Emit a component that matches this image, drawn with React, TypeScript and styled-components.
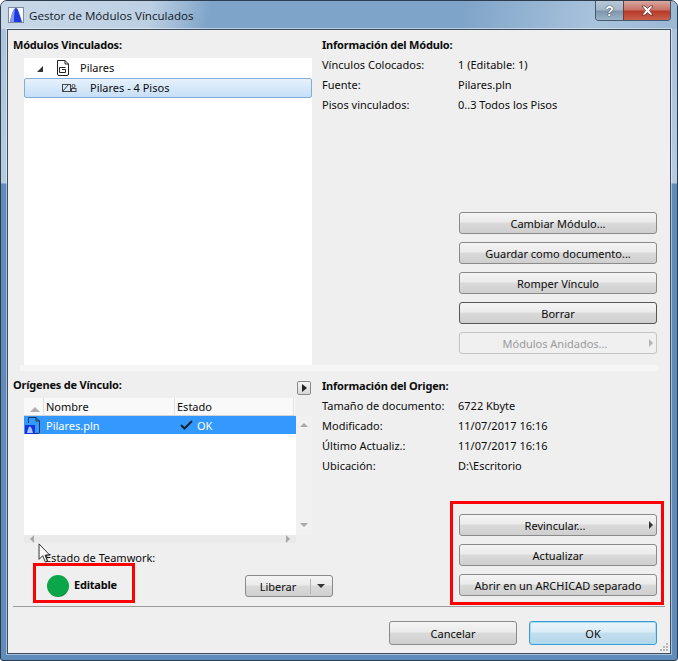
import styled, { createGlobalStyle } from 'styled-components';

const GlobalStyle = createGlobalStyle`
  html, body {
    margin: 0;
    padding: 0;
    background: #ffffff;
  }
  body {
    font-family: "Noto Sans", "Liberation Sans", sans-serif;
    font-size: 11px;
    color: #0c0c0c;
  }
`;

const buttonFace = 'linear-gradient(180deg, #f4f4f4 0, #ebebeb 45%, #dadada 50%, #cfcfcf 100%)';

const Window = styled.div`
  position: relative;
  width: 678px;
  height: 661px;
  box-sizing: border-box;
  padding: 0 6px 6px;
  display: flex;
  flex-direction: column;
  border: 1px solid #2f3c4c;
  border-radius: 7px 7px 3px 3px;
  overflow: hidden;
  background: linear-gradient(180deg, #a9c3dc 0, #b6cbe0 182px, #5f8cbb 183px, #5f8cbb 100%);
`;

const TitleBar = styled.div`
  height: 28px;
  flex: none;
  display: flex;
  align-items: center;
  margin: 0 -6px;
  padding-left: 7px;
  background: linear-gradient(100deg, #c8d8e8 0, #bdd0e3 22%, #7fa4c9 31%, #7fa4c9 68%, #a9c3dc 88%, #9ab7d4 100%);
`;

const TitleText = styled.span`
  margin-left: 5px;
  font-family: "Open Sans", sans-serif;
  font-size: 11.6px;
  color: #10181f;
`;

const WindowButtons = styled.div`
  margin-left: auto;
  margin-right: 6px;
  align-self: flex-start;
  display: flex;
  height: 19px;
  border: 1px solid #46586b;
  border-top: none;
  border-radius: 0 0 4px 4px;
  overflow: hidden;
`;

const WindowButton = styled.div<{ $close?: boolean }>`
  display: flex;
  align-items: center;
  justify-content: center;
  box-sizing: border-box;
  width: ${(p) => (p.$close ? '47px' : '27px')};
  font: bold 14px "Liberation Sans", sans-serif;
  color: #ffffff;
  text-shadow: 0 0 1px #222222, 0 0 1px #222222;
  border-left: ${(p) => (p.$close ? '1px solid #6c3a38' : 'none')};
  background: ${(p) =>
    p.$close
      ? 'linear-gradient(180deg, #d8a8a0 0, #c87468 45%, #b83a28 55%, #c9604e 100%)'
      : 'linear-gradient(180deg, #b6c8d8 0, #a3b8ca 45%, #7f97ac 55%, #9db4c8 100%)'};
`;

const Client = styled.div`
  flex: 1;
  position: relative;
  display: flex;
  flex-direction: column;
  border: 1px solid #3d4d5e;
  box-shadow: 0 0 0 1px rgba(255, 255, 255, 0.45);
  background: #efefef;
  min-height: 0;
`;

const Columns = styled.div`
  display: grid;
  grid-template-columns: 304px 1fr;
`;

const TopColumns = styled(Columns)`
  height: 335px;
`;

const BottomColumns = styled(Columns)`
  height: 235px;
`;

const Pane = styled.div`
  display: flex;
  flex-direction: column;
  min-width: 0;
`;

const LeftPane = styled(Pane)`
  padding-left: 5px;
`;

const RightPane = styled(Pane)<{ $bottom: number }>`
  padding: 0 7px ${(p) => p.$bottom}px 10px;
`;

const Heading = styled.div`
  height: 20px;
  line-height: 20px;
  margin-top: 5px;
  font-weight: 700;
  letter-spacing: -0.2px;
  flex: none;
`;

const Tree = styled.div`
  margin: 3px 0 0 11px;
  flex: 1;
  background: #ffffff;
`;

const TreeRow = styled.div<{ $selected?: boolean; $indent: number }>`
  display: flex;
  align-items: center;
  height: 20px;
  box-sizing: border-box;
  padding-left: ${(p) => p.$indent}px;
  border: 1px solid ${(p) => (p.$selected ? '#84acdd' : 'transparent')};
  border-radius: 2px;
  background: ${(p) => (p.$selected ? 'linear-gradient(180deg, #e6f1fc, #c6dff7)' : 'transparent')};
`;

const TreeCaret = styled.span`
  width: 0;
  height: 0;
  border-style: solid;
  border-width: 0 0 6px 6px;
  border-color: transparent transparent #333333;
  margin-top: 2px;
`;

const TreeIcon = styled.span`
  display: flex;
  margin-left: 13px;
`;

const TreeLabel = styled.span<{ $gap: number }>`
  margin: 0 0 2px ${(p) => p.$gap}px;
`;

const InfoRow = styled.div`
  display: grid;
  grid-template-columns: 136px 1fr;
  height: 20px;
  line-height: 20px;
  flex: none;
`;

const ButtonStack = styled.div`
  margin-top: auto;
  display: flex;
  flex-direction: column;
  gap: 8px;
  width: 198px;
  margin-left: 137px;
`;

const Button = styled.div<{ $disabled?: boolean; $dark?: boolean; $menu?: boolean }>`
  position: relative;
  height: 22px;
  box-sizing: border-box;
  display: flex;
  align-items: center;
  justify-content: center;
  padding-right: ${(p) => (p.$menu ? '6px' : '0')};
  border: 1px solid ${(p) => (p.$disabled ? '#c4c4c4' : p.$dark ? '#555555' : '#8a8a8a')};
  border-radius: 3px;
  color: ${(p) => (p.$disabled ? '#9a9a9a' : '#0c0c0c')};
  background: ${(p) => (p.$disabled ? '#f0f0f0' : buttonFace)};
`;

const ButtonArrow = styled.span<{ $disabled?: boolean }>`
  position: absolute;
  right: 3px;
  top: 6px;
  width: 0;
  height: 0;
  border-style: solid;
  border-width: 4px 0 4px 4px;
  border-color: transparent transparent transparent ${(p) => (p.$disabled ? '#b5b5b5' : '#333333')};
`;

const Splitter = styled.div`
  height: 6px;
  flex: none;
  margin: 0 12px;
  background: #f6f6f6;
`;

const OriginHeader = styled.div`
  display: flex;
  justify-content: space-between;
  padding-right: 1px;
`;

const OriginHeading = styled(Heading)`
  margin-top: 4px;
`;

const ExpandButton = styled.div`
  width: 14px;
  height: 14px;
  margin-top: 10px;
  box-sizing: border-box;
  display: flex;
  align-items: center;
  justify-content: center;
  border: 1px solid #8a8a8a;
  border-radius: 2px;
  background: linear-gradient(180deg, #f4f4f4, #d8d8d8);
  &::before {
    content: '';
    border-style: solid;
    border-width: 4px 0 4px 5px;
    border-color: transparent transparent transparent #222222;
  }
`;

const ListArea = styled.div`
  margin: 3px 0 0 11px;
  display: grid;
  grid-template-columns: 272px 16px;
  grid-template-rows: 18px 119px 8px;
  width: 288px;
`;

const ListHeader = styled.div`
  grid-column: 1 / 3;
  display: flex;
  height: 17px;
  width: 271px;
  border-bottom: 1px solid #d4d4d4;
  background: #f9f9f9;
`;

const ListHeaderCell = styled.div<{ $width: number }>`
  width: ${(p) => p.$width}px;
  flex: none;
  box-sizing: border-box;
  display: flex;
  align-items: center;
  padding-left: 2px;
  border-right: 1px solid #e0e0e0;
`;

const SortCorner = styled(ListHeaderCell)`
  justify-content: center;
  &::before {
    content: '';
    border-style: solid;
    border-width: 0 5px 5px 5px;
    border-color: transparent transparent #b0b0b0 transparent;
    margin-top: 5px;
  }
`;

const ListBody = styled.div`
  background: #ffffff;
`;

const ListRow = styled.div`
  height: 18px;
  display: flex;
  align-items: center;
  background: #3399ff;
  color: #ffffff;
`;

const FileName = styled.span`
  width: 134px;
  margin-left: 5px;
  flex: none;
`;

const StatusMark = styled.span`
  display: flex;
  align-items: center;
  gap: 4px;
`;

const ScrollTrack = styled.div`
  display: flex;
  flex-direction: column;
  justify-content: space-between;
  align-items: center;
  padding: 7px 0 8px;
  box-sizing: border-box;
  background: #f1f1f1;
`;

const HScroll = styled.div`
  grid-column: 1 / 2;
  display: flex;
  justify-content: space-between;
  align-items: center;
  padding: 0 6px;
  background: #eaeaea;
`;

const Tick = styled.span<{ $dir: 'up' | 'down' | 'left' | 'right' }>`
  width: 0;
  height: 0;
  border-style: solid;
  border-color: transparent;
  ${(p) => p.$dir === 'up' && 'border-width: 0 4px 4px; border-bottom-color: #a8a8a8;'}
  ${(p) => p.$dir === 'down' && 'border-width: 4px 4px 0; border-top-color: #a8a8a8;'}
  ${(p) => p.$dir === 'left' && 'border-width: 4px 4px 4px 0; border-right-color: #a8a8a8;'}
  ${(p) => p.$dir === 'right' && 'border-width: 4px 0 4px 4px; border-left-color: #a8a8a8;'}
`;

const TeamworkLabel = styled.div`
  margin: 7px 0 0 32px;
  height: 16px;
  line-height: 16px;
`;

const TeamworkRow = styled.div`
  display: flex;
  align-items: center;
  margin: 8px -21px 0 34px;
`;

const StatusDot = styled.div`
  width: 22px;
  height: 22px;
  border-radius: 50%;
  background: radial-gradient(circle at 42% 38%, #0ba64a 0, #0ba64a 68%, #0a8a3e 72%);
`;

const StatusText = styled.span`
  margin: 0 0 2px 5px;
  font-weight: 700;
  letter-spacing: -0.2px;
`;

const SplitButton = styled.div`
  margin-left: auto;
  margin-top: 1px;
  width: 88px;
  height: 22px;
  box-sizing: border-box;
  display: flex;
  align-items: center;
  border: 1px solid #8a8a8a;
  border-radius: 3px;
  background: ${buttonFace};
`;

const SplitLabel = styled.span`
  width: 64px;
  text-align: center;
  border-right: 1px solid #b4b4b4;
`;

const SplitArrow = styled.span`
  margin-left: 6px;
  border-style: solid;
  border-width: 4px 4px 0;
  border-color: #333333 transparent transparent;
`;

const FooterRule = styled.div`
  height: 1px;
  flex: none;
  margin: 0 5px;
  background: #9a9a9a;
`;

const Footer = styled.div`
  flex: 1;
  display: flex;
  justify-content: flex-end;
  align-items: flex-start;
  gap: 12px;
  padding: 14px 13px 0 0;
`;

const FooterButton = styled.div<{ $primary?: boolean }>`
  width: 128px;
  height: 24px;
  box-sizing: border-box;
  display: flex;
  align-items: center;
  justify-content: center;
  border: 1px solid ${(p) => (p.$primary ? '#3c9bd2' : '#8a8a8a')};
  border-radius: 3px;
  box-shadow: ${(p) => (p.$primary ? 'inset 0 0 0 1px #a5dcf2' : 'none')};
  background: ${(p) =>
    p.$primary
      ? 'linear-gradient(180deg, #eaf5fb 0, #dcecf6 45%, #c2dfef 50%, #b4d6ea 100%)'
      : buttonFace};
`;

const Callout = styled.div<{ $x: number; $y: number; $w: number; $h: number }>`
  position: absolute;
  left: ${(p) => p.$x}px;
  top: ${(p) => p.$y}px;
  width: ${(p) => p.$w}px;
  height: ${(p) => p.$h}px;
  box-sizing: border-box;
  border: 3px solid #ff0000;
  pointer-events: none;
`;

const Cursor = styled.svg`
  position: absolute;
  left: 37px;
  top: 542px;
`;

const GripDots = styled.svg`
  position: absolute;
  right: 1px;
  bottom: 1px;
`;

const AppIcon = () => (
  <svg width="16" height="16" viewBox="0 0 16 16">
    <rect x="0.5" y="0.5" width="15" height="15" fill="#f6f8fd" stroke="#7d8aa0" />
    <path d="M2 15 C4 5 6 1 8 1 C10 1 12 9 14 15 Z" fill="#1f3be0" />
    <path d="M2 15 C4 6 5 3 7 2 C6 6 6 11 6 15 Z" fill="#7f9cf0" />
  </svg>
);

const ModuleIcon = () => (
  <svg width="14" height="16" viewBox="0 0 14 16" fill="none" stroke="#222222">
    <path d="M1.5 0.5 H9 L12.5 4 V14 Q12.5 15.5 11 15.5 H3 Q1.5 15.5 1.5 14 Z" />
    <path d="M9 0.5 V4 H12.5" />
    <path d="M3.5 7.5 H9.5 M3.5 7.5 V12.5 H9.5 V9.5 H6" />
  </svg>
);

const LinkIcon = () => (
  <svg width="15" height="10" viewBox="0 0 15 10" fill="none" stroke="#444444">
    <rect x="0.5" y="1.5" width="8" height="7" />
    <path d="M1 8 L6 2" />
    <circle cx="11.5" cy="3" r="1.6" />
    <rect x="9.5" y="5.5" width="4.5" height="3" />
  </svg>
);

const PlnIcon = () => (
  <svg width="17" height="17" viewBox="0 0 17 17">
    <path d="M4.5 0.5 H12 L15.5 4 V15 Q15.5 16.5 14 16.5 H11" fill="none" stroke="#1d3550" />
    <path d="M4.5 6 V0.5 M12 0.5 V4 H15.5" fill="none" stroke="#1d3550" />
    <rect x="1" y="8" width="10" height="9" fill="#1533e0" />
    <path d="M3 16 C4 11 5 9.5 6 9.5 C7 9.5 8 12 9 16 Z" fill="#a9c4ff" />
  </svg>
);

const CheckIcon = () => (
  <svg width="13" height="10" viewBox="0 0 13 10" fill="none" stroke="#15212e" strokeWidth="2">
    <path d="M1 5 L4.5 8.5 L12 1" />
  </svg>
);

const CloseIcon = () => (
  <svg width="15" height="11" viewBox="0 0 15 11">
    <path d="M2 1 H5 L7.5 3.5 L10 1 H13 L9.5 5.5 L13 10 H10 L7.5 7.5 L5 10 H2 L5.5 5.5 Z" fill="#ffffff" stroke="#5a2a22" strokeWidth="0.7" />
  </svg>
);

const App = () => (
  <>
    <GlobalStyle />
    <Window>
      <TitleBar>
        <AppIcon />
        <TitleText>Gestor de Módulos Vínculados</TitleText>
        <WindowButtons>
          <WindowButton>?</WindowButton>
          <WindowButton $close>
            <CloseIcon />
          </WindowButton>
        </WindowButtons>
      </TitleBar>
      <Client>
        <TopColumns>
          <LeftPane>
            <Heading>Módulos Vinculados:</Heading>
            <Tree>
              <TreeRow $indent={12}>
                <TreeCaret />
                <TreeIcon>
                  <ModuleIcon />
                </TreeIcon>
                <TreeLabel $gap={10}>Pilares</TreeLabel>
              </TreeRow>
              <TreeRow $selected $indent={37}>
                <LinkIcon />
                <TreeLabel $gap={13}>Pilares - 4 Pisos</TreeLabel>
              </TreeRow>
            </Tree>
          </LeftPane>
          <RightPane $bottom={11}>
            <Heading>Información del Módulo:</Heading>
            <InfoRow>
              <span>Vínculos Colocados:</span>
              <span>1 (Editable: 1)</span>
            </InfoRow>
            <InfoRow>
              <span>Fuente:</span>
              <span>Pilares.pln</span>
            </InfoRow>
            <InfoRow>
              <span>Pisos vinculados:</span>
              <span>0..3 Todos los Pisos</span>
            </InfoRow>
            <ButtonStack>
              <Button>Cambiar Módulo...</Button>
              <Button>Guardar como documento...</Button>
              <Button>Romper Vínculo</Button>
              <Button $dark>Borrar</Button>
              <Button $disabled $menu>
                Módulos Anidados...
                <ButtonArrow $disabled />
              </Button>
            </ButtonStack>
          </RightPane>
        </TopColumns>
        <Splitter />
        <BottomColumns>
          <LeftPane>
            <OriginHeader>
              <OriginHeading>Orígenes de Vínculo:</OriginHeading>
              <ExpandButton />
            </OriginHeader>
            <ListArea>
              <ListHeader>
                <SortCorner $width={20} />
                <ListHeaderCell $width={131}>Nombre</ListHeaderCell>
                <ListHeaderCell $width={119}>Estado</ListHeaderCell>
              </ListHeader>
              <ListBody>
                <ListRow>
                  <PlnIcon />
                  <FileName>Pilares.pln</FileName>
                  <StatusMark>
                    <CheckIcon />
                    OK
                  </StatusMark>
                </ListRow>
              </ListBody>
              <ScrollTrack>
                <Tick $dir="up" />
                <Tick $dir="down" />
              </ScrollTrack>
              <HScroll>
                <Tick $dir="left" />
                <Tick $dir="right" />
              </HScroll>
            </ListArea>
            <TeamworkLabel>Estado de Teamwork:</TeamworkLabel>
            <TeamworkRow>
              <StatusDot />
              <StatusText>Editable</StatusText>
              <SplitButton>
                <SplitLabel>Liberar</SplitLabel>
                <SplitArrow />
              </SplitButton>
            </TeamworkRow>
          </LeftPane>
          <RightPane $bottom={10}>
            <Heading>Información del Origen:</Heading>
            <InfoRow>
              <span>Tamaño de documento:</span>
              <span>6722 Kbyte</span>
            </InfoRow>
            <InfoRow>
              <span>Modificado:</span>
              <span>11/07/2017 16:16</span>
            </InfoRow>
            <InfoRow>
              <span>Último Actualiz.:</span>
              <span>11/07/2017 16:16</span>
            </InfoRow>
            <InfoRow>
              <span>Ubicación:</span>
              <span>D:\Escritorio</span>
            </InfoRow>
            <ButtonStack>
              <Button $menu>
                Revincular...
                <ButtonArrow />
              </Button>
              <Button>Actualizar</Button>
              <Button>Abrir en un ARCHICAD separado</Button>
            </ButtonStack>
          </RightPane>
        </BottomColumns>
        <FooterRule />
        <Footer>
          <FooterButton>Cancelar</FooterButton>
          <FooterButton $primary>OK</FooterButton>
        </Footer>
        <Callout $x={25} $y={533} $w={102} $h={40} />
        <Callout $x={442} $y={471} $w={214} $h={104} />
        <GripDots width="10" height="10" viewBox="0 0 10 10" fill="#b5b5b5">
          <rect x="7" y="1" width="2" height="2" />
          <rect x="4" y="4" width="2" height="2" />
          <rect x="7" y="4" width="2" height="2" />
          <rect x="1" y="7" width="2" height="2" />
          <rect x="4" y="7" width="2" height="2" />
          <rect x="7" y="7" width="2" height="2" />
        </GripDots>
      </Client>
      <Cursor width="13" height="20" viewBox="0 0 14 22">
        <path d="M1 1 V18 L5 14 L8 21 L10.5 20 L7.5 13.5 H13 Z" fill="#ffffff" fillOpacity="0.6" stroke="#222222" />
      </Cursor>
    </Window>
  </>
);

export default App;
